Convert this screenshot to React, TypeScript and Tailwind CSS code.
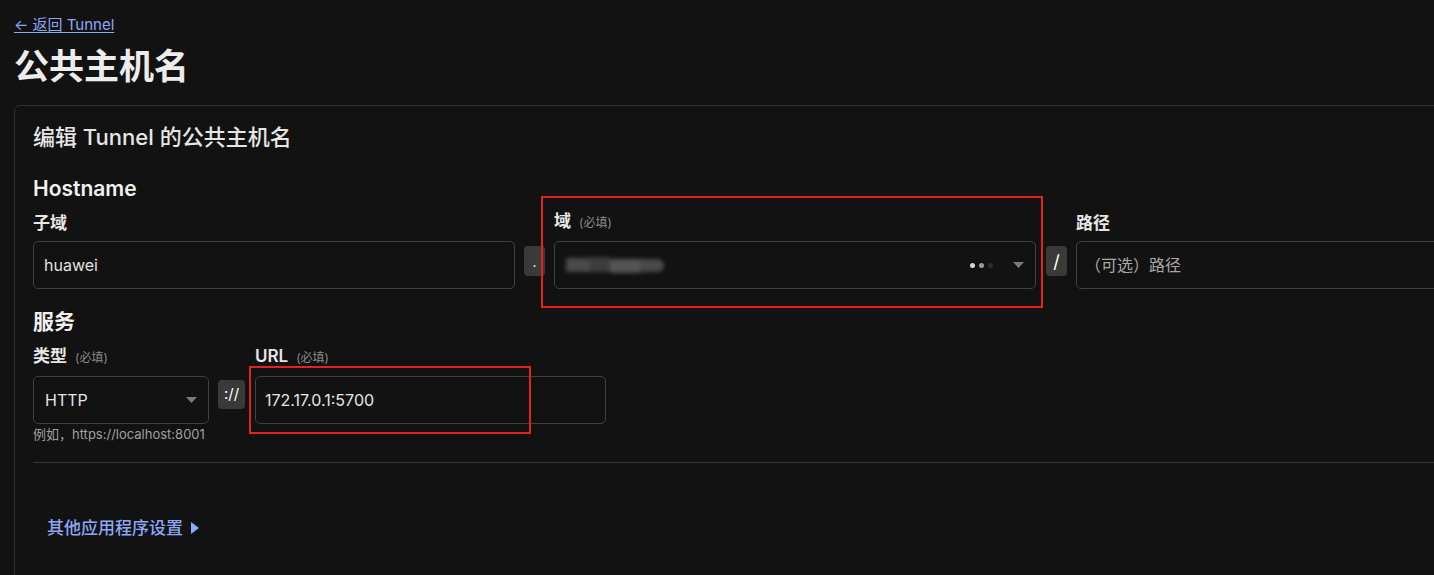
import React from "react";

const font = { fontFamily: 'Inter, "Noto Sans CJK SC", sans-serif' };

function Req() {
  return <span className="ml-[8px] text-[12px] font-normal text-[#8a8a8a]">(必填)</span>;
}

function Caret() {
  return (
    <svg width="11" height="6" viewBox="0 0 11 6" className="shrink-0">
      <path d="M0 0 L11 0 L5.5 6 Z" fill="#7a7a7a" />
    </svg>
  );
}

export default function App() {
  return (
    <div
      className="relative w-[1434px] h-[575px] overflow-hidden bg-[#121212] text-[#e6e6e6] pl-[14px] pt-[15px]"
      style={font}
    >
      <a href="#" className="block w-fit text-[15px] leading-[20px] text-[#8ea8f6] underline underline-offset-2">
        ← 返回 Tunnel
      </a>
      <h1 className="mt-[11px] text-[35px] leading-[40px] font-semibold text-[#ececec]">公共主机名</h1>

      <div className="mt-[19px] w-[1620px] h-[600px] rounded-[6px] border border-[#303030] px-[18px] pt-[17px]">
        <h2 className="text-[22px] leading-[28px] font-medium text-[#e6e6e6]">编辑 Tunnel 的公共主机名</h2>

        <h3 className="mt-[24px] text-[21px] leading-[28px] font-semibold text-[#f0f0f0]">Hostname</h3>

        <div className="mt-[6px] flex items-end">
          <div className="w-[482px]">
            <div className="text-[17px] leading-[24px] font-semibold">子域</div>
            <div className="mt-[6px] h-[48px] rounded-[5px] border border-[#404040] flex items-center px-[10px] text-[16px] text-[#e2e2e2]">
              huawei
            </div>
          </div>
          <div className="mx-[9px] mb-[13px] w-[21px] h-[30px] rounded-[4px] bg-[#3a3a3a] flex items-center justify-center text-[14px] text-white">
            .
          </div>
          <div className="w-[482px]">
            <div className="text-[17px] leading-[24px] font-semibold">
              域<Req />
            </div>
            <div className="mt-[6px] h-[48px] rounded-[5px] border border-[#404040] flex items-center pl-[11px] pr-[11px]">
              <div className="relative h-[18px] w-[100px] blur-[2px]">
                <div className="absolute left-0 top-[2px] h-[14px] w-[24px] bg-[#4a4a4a]" />
                <div className="absolute left-[24px] top-[1px] h-[15px] w-[20px] bg-[#3c3c3c]" />
                <div className="absolute left-[44px] top-[3px] h-[14px] w-[30px] bg-[#545454]" />
                <div className="absolute left-[74px] top-[3px] h-[13px] w-[24px] rounded-r-full bg-[#4a4a4a]" />
              </div>
              <div className="ml-auto flex items-center gap-[4px] mr-[20px]">
                <span className="w-[5px] h-[5px] rounded-full bg-[#d8d8d8]" />
                <span className="w-[5px] h-[5px] rounded-full bg-[#9a9a9a]" />
                <span className="w-[5px] h-[5px] rounded-full bg-[#2e2e2e]" />
              </div>
              <Caret />
            </div>
          </div>
          <div className="ml-[10px] mr-[9px] mb-[13px] w-[21px] h-[30px] rounded-[4px] bg-[#3a3a3a] flex items-center justify-center text-[18px] text-white">
            /
          </div>
          <div className="w-[482px]">
            <div className="text-[17px] leading-[24px] font-semibold">路径</div>
            <div className="mt-[6px] h-[48px] rounded-[5px] border border-[#404040] flex items-center px-[8px] text-[16px] text-[#a8a8a8]">
              （可选）路径
            </div>
          </div>
        </div>

        <h3 className="mt-[19px] text-[21px] leading-[28px] font-semibold text-[#f0f0f0]">服务</h3>

        <div className="mt-[8px] flex items-start">
          <div className="w-[176px]">
            <div className="text-[17px] leading-[24px] font-semibold">
              类型<Req />
            </div>
            <div className="mt-[6px] h-[48px] rounded-[5px] border border-[#404040] flex items-center pl-[11px] pr-[11px] text-[16px] text-[#e2e2e2]">
              HTTP
              <span className="ml-auto"><Caret /></span>
            </div>
            <div className="mt-[1px] text-[13px] leading-[18px] text-[#a0a0a0] whitespace-nowrap">例如，https://localhost:8001</div>
          </div>
          <div className="mt-[36px] ml-[9px] mr-[10px] w-[27px] h-[29px] rounded-[4px] bg-[#3a3a3a] flex items-center justify-center text-[15px] text-white">
            ://
          </div>
          <div className="w-[351px]">
            <div className="text-[17px] leading-[24px] font-semibold">
              URL<Req />
            </div>
            <div className="mt-[6px] h-[48px] rounded-[5px] border border-[#404040] flex items-center px-[9px] text-[16px] text-[#e6e6e6]">
              172.17.0.1:5700
            </div>
          </div>
        </div>

        <div className="mt-[19px] h-px bg-[#353535]" />

        <a href="#" className="mt-[53px] ml-[14px] flex items-center w-fit text-[17px] leading-[24px] font-medium text-[#8ea8f6]">
          其他应用程序设置
          <svg width="8" height="12" viewBox="0 0 8 12" className="ml-[8px]">
            <path d="M0 0 L8 6 L0 12 Z" fill="#8ea8f6" />
          </svg>
        </a>
      </div>

      <div className="absolute left-[541px] top-[196px] w-[502px] h-[112px] border-2 border-[#e3231b] pointer-events-none" />
      <div className="absolute left-[249px] top-[366px] w-[282px] h-[68px] border-2 border-[#e3231b] pointer-events-none" />
    </div>
  );
}
